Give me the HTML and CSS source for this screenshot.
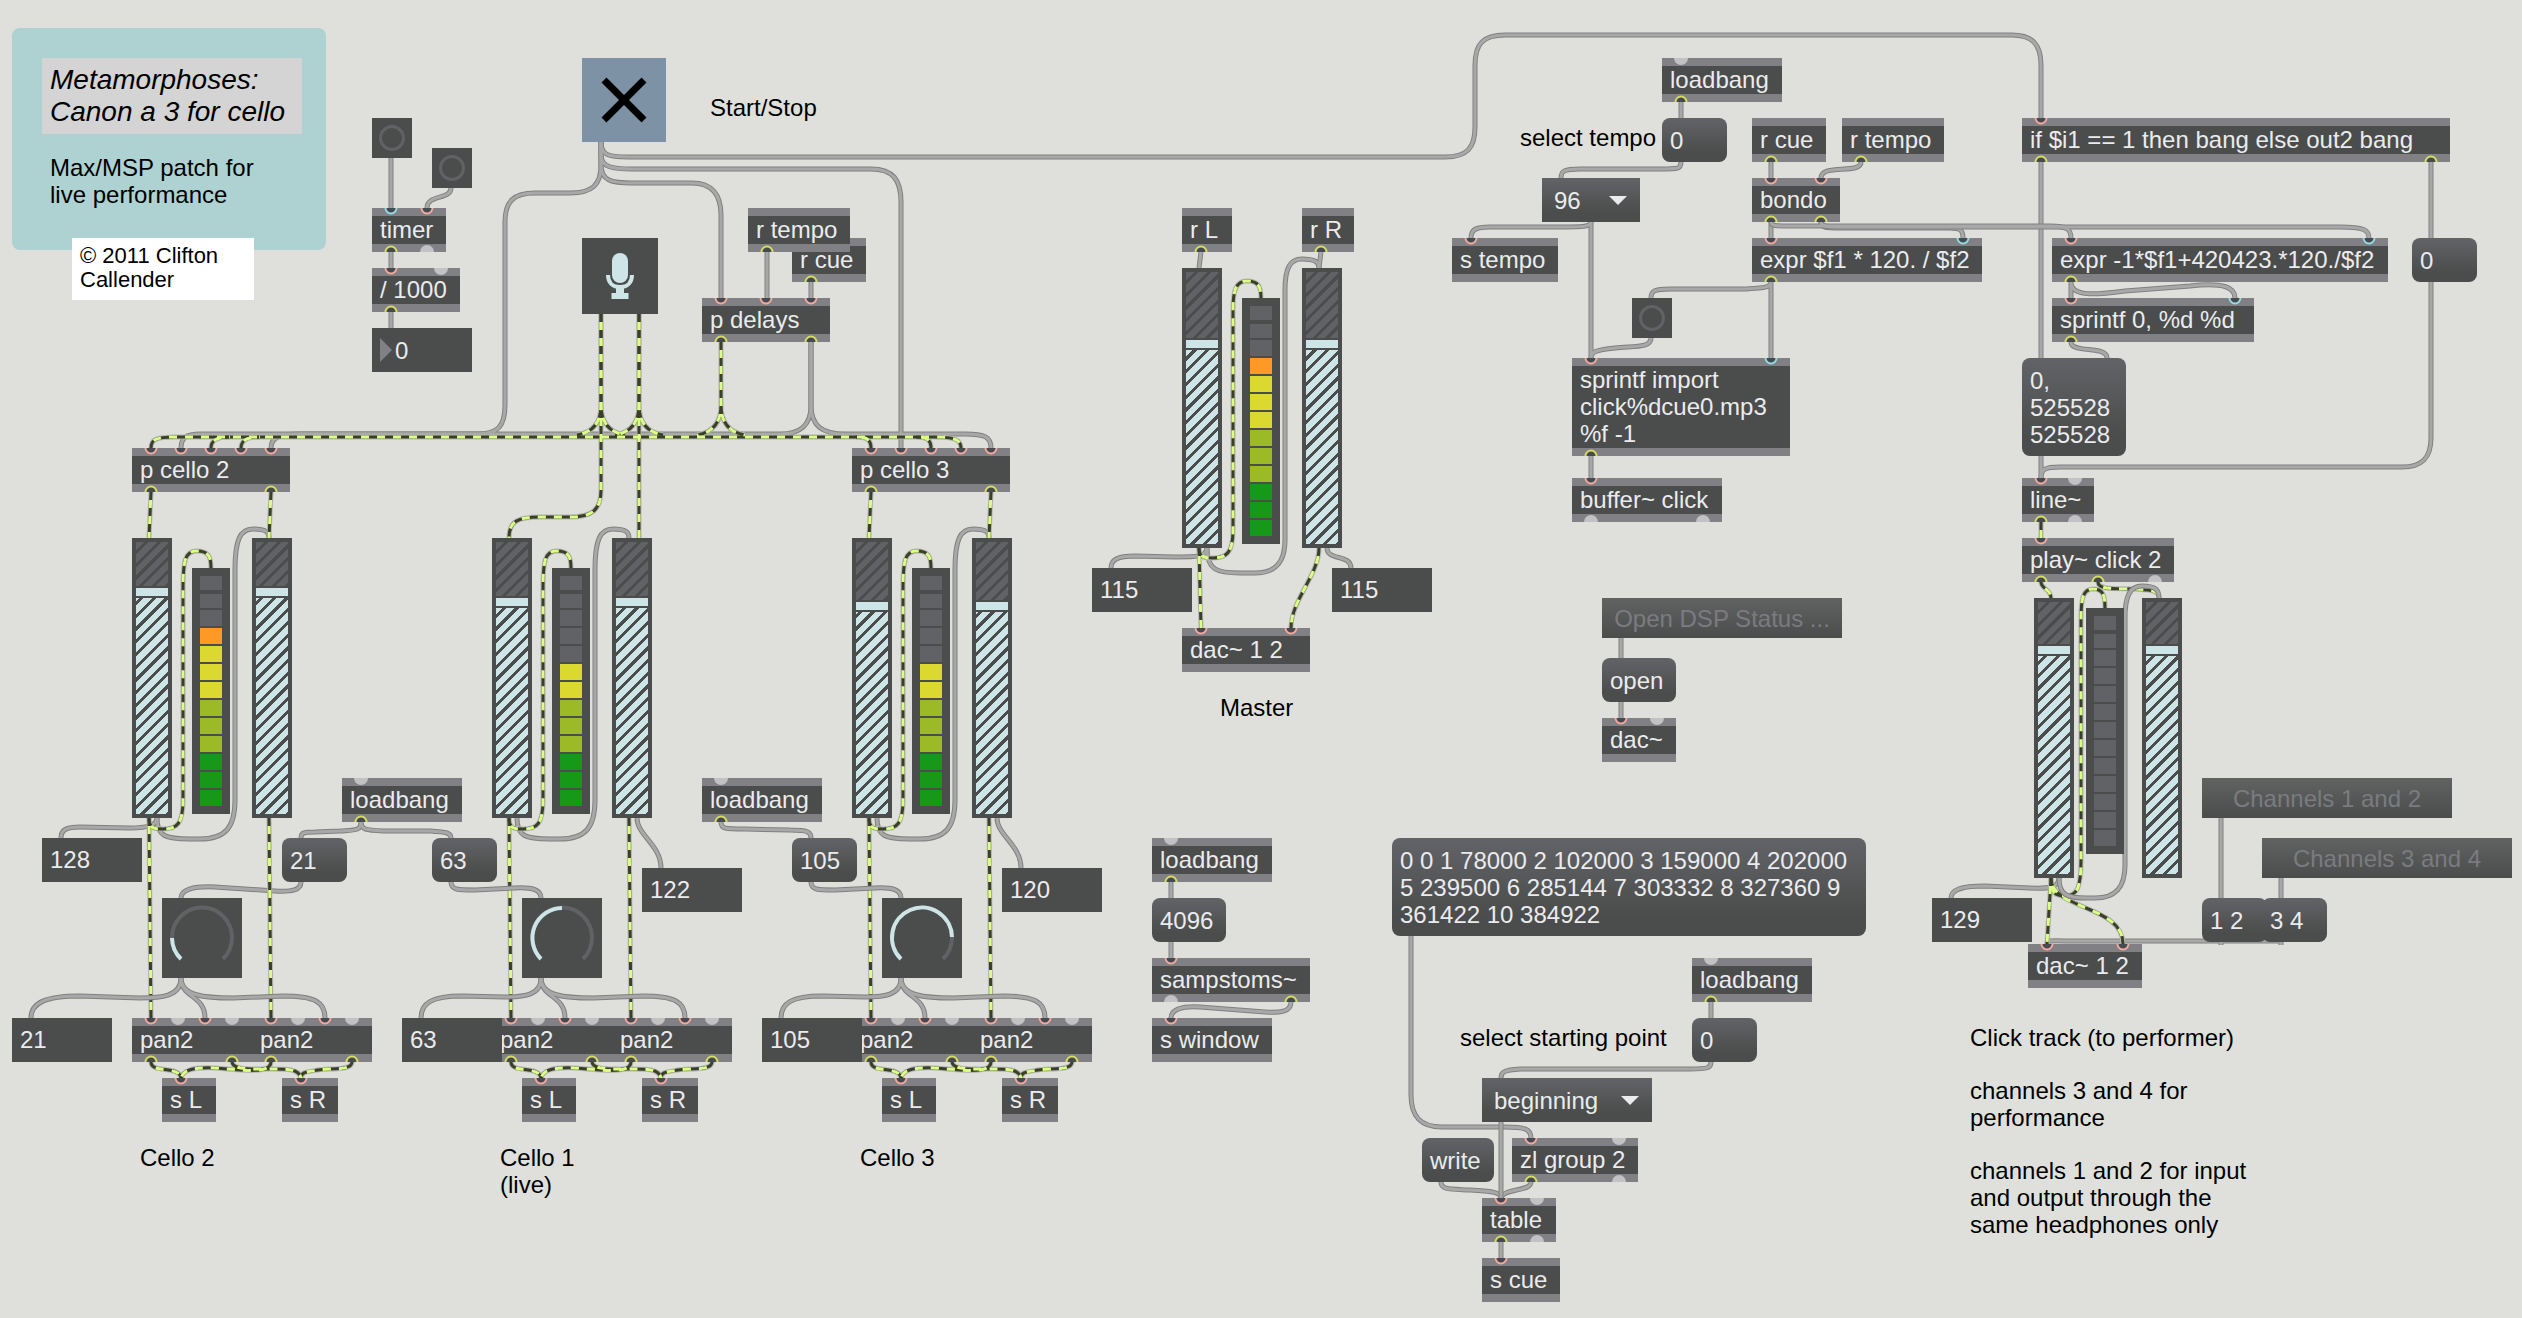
FILE: index.html
```html
<!DOCTYPE html>
<html lang="en">
<head>
<meta charset="utf-8">
<title>Metamorphoses: Canon a 3 for cello</title>
<link rel="stylesheet" href="styles.css">
</head>
<body>
<main class="canvas">

<svg class="layer" aria-hidden="true">
  <defs>
    <!-- cords repeated in each of the three cello strips -->
    <g id="strip-control">
      <path d="M157 818C157 836 165 839 190 839H200C225 839 235 828 235 800V570C235 540 240 529 253 529C266 529 269 532 269 538"/>
    </g>
    <g id="strip-signal">
      <path d="M149 818C149 829 155 829 163 829C177 829 183 824 183 800V590C183 560 185 551 197 551C208 551 211 556 211 568"/>
      <path d="M149 818L151 1018"/>
      <path d="M269 818L271 1018"/>
      <path d="M151 1062C151 1074 179 1065 181 1078"/>
      <path d="M232 1062C233 1069 245 1069 265 1069S299 1068 301 1078"/>
      <path d="M271 1062C271 1071 255 1071 240 1070L215 1068C190 1067 183 1071 181 1078"/>
      <path d="M352 1062C352 1071 330 1068 318 1070S301 1072 301 1078"/>
    </g>
    <g id="strip-dial">
      <path d="M181 978C181 998 205 995 205 1018"/>
      <path d="M181 978C181 996 205 998 233 998L283 996C315 996 325 1002 325 1018"/>
    </g>

    <g id="control">
      <use href="#strip-control"/>
      <use href="#strip-control" x="360"/>
      <use href="#strip-control" x="720"/>
      <path d="M391 158V208M451 188C451 200 427 194 427 208M391 252V268M391 312V328"/>
      <path d="M601 142V165C601 185 592 193 570 193H535C514 193 505 201 505 222V405C505 426 498 434 478 434H200C186 434 181 438 181 448"/>
      <path d="M601 142C601 155 608 157 628 157H1445C1467 157 1475 148 1475 127V65C1475 44 1483 35 1505 35H2012C2032 35 2041 44 2041 65V118"/>
      <path d="M601 142V155C601 167 612 169 632 169H871C893 169 901 180 901 202V448"/>
      <path d="M601 142V165C601 181 612 183 632 183H692C712 183 721 195 721 215V298"/>
      <path d="M767 252V298M811 282V298"/>
      <path d="M811 342V405C811 426 800 434 780 434H300C280 434 271 437 271 448"/>
      <path d="M811 342V405C811 426 822 434 845 434H965C985 434 991 437 991 448"/>
      <path d="M157 818C157 826 145 828 130 828L80 827C66 827 61 830 61 838"/>
      <path d="M637 818C637 835 661 845 661 868M997 818C997 835 1021 845 1021 868"/>
      <path d="M361 822C361 831 355 830 340 831L315 832C303 832 301 833 301 838"/>
      <path d="M361 822C361 830 366 830 385 831H430C447 832 451 833 451 838"/>
      <path d="M721 822C721 829 725 829 745 829L790 830C808 830 811 832 811 838"/>
      <path d="M301 882C301 890 292 892 275 891L215 887C192 886 181 890 181 898"/>
      <path d="M1201 252L1199 268M1321 252L1319 268"/>
      <path d="M1207 548C1207 557 1195 557 1175 557L1135 556C1117 556 1111 560 1111 568"/>
      <path d="M1207 548C1207 570 1217 573 1240 573H1255C1276 573 1285 562 1285 540V290C1285 268 1290 259 1302 259C1315 259 1319 262 1319 268"/>
      <path d="M1327 548C1327 561 1351 554 1351 568"/>
      <path d="M1171 882V898M1171 942V958M1621 638V658M1621 702V718"/>
      <path d="M1291 1002C1291 1012 1280 1013 1265 1012L1200 1007C1180 1006 1171 1010 1171 1018"/>
      <path d="M1681 102V118M1681 162C1681 169 1678 169 1660 169H1580C1564 169 1561 171 1561 178"/>
      <path d="M1591 222C1591 227 1580 227 1565 227H1490C1475 227 1471 230 1471 238"/>
      <path d="M1591 222V358M1771 162V178M1861 162C1861 175 1821 163 1821 178M1771 222V238"/>
      <path d="M1771 282V358M1771 282C1771 288 1762 288 1745 289H1670C1654 289 1651 291 1651 298"/>
      <path d="M1651 338C1651 348 1635 346 1615 348S1591 352 1591 358M1591 456V478"/>
      <path d="M1821 222C1821 228 1826 228 1840 228H1950C1960 228 1963 230 1963 238"/>
      <path d="M2041 162V358M2431 162V238M2041 456V478"/>
      <path d="M2431 282V438C2431 458 2422 467 2402 467H2060C2045 467 2041 469 2041 478"/>
      <path d="M2071 282V298M2071 282C2071 297 2095 295 2125 291L2190 286C2225 282 2235 288 2235 298"/>
      <path d="M2071 342C2071 354 2107 345 2107 358"/>
      <path d="M2059 878C2059 887 2050 889 2030 888L1985 886C1960 886 1951 890 1951 898"/>
      <path d="M2221 818V898M2281 878V898M2281 945V941H2065C2050 940 2047 941 2047 944M2221 945V941"/>
      <path d="M1411 936V1095C1411 1116 1420 1127 1442 1127H1505C1525 1127 1531 1129 1531 1138"/>
      <path d="M1711 1002V1018M1711 1062C1711 1068 1708 1069 1690 1069H1520C1504 1070 1501 1072 1501 1078"/>
      <path d="M1441 1182C1441 1190 1450 1189 1470 1190S1501 1192 1501 1198"/>
      <path d="M1531 1182C1531 1192 1503 1188 1501 1198M1501 1242V1258"/>
    </g>
    <g id="signal">
      <use href="#strip-signal"/>
      <use href="#strip-signal" x="360"/>
      <use href="#strip-signal" x="720"/>
      <!-- branches off the bus that feeds both cello patches -->
      <path d="M721 342V405C721 426 709 433 697 435M721 342V405C721 426 733 433 745 435"/>
      <path d="M601 314V405C601 426 589 433 577 435M601 314V405C601 426 613 433 625 435"/>
      <path d="M639 314V405C639 426 627 433 615 435M639 314V405C639 426 651 433 663 435"/>
      <path d="M211 448C211 440 217 437 230 437M241 448C241 440 247 437 260 437"/>
      <path d="M871 448C871 440 867 437 856 437M931 448C931 440 927 437 916 437"/>
      <path d="M151 448C151 440 155 437 175 437H935C955 437 961 440 961 448"/>
      <path d="M601 314V490C601 510 592 517 570 517H540C518 517 509 521 509 538"/>
      <path d="M639 314V538"/>
      <path d="M151 492L149 538M271 492L269 538M871 492L869 538M991 492L989 538"/>
      <path d="M1199 548C1199 558 1205 558 1213 558C1227 558 1233 552 1233 530V310C1233 290 1236 281 1247 281C1258 281 1261 286 1261 298"/>
      <path d="M1199 548L1201 628M1319 548C1319 575 1291 600 1291 628"/>
      <path d="M2041 522V538M2041 582C2041 589 2051 589 2051 598"/>
      <path d="M2098 582C2098 591 2120 588 2135 589S2159 590 2159 598"/>
      <path d="M2051 878C2051 894 2056 896 2065 896C2077 896 2081 888 2081 860V620C2081 598 2083 589 2093 589C2103 589 2105 595 2105 608"/>
      <path d="M2051 878L2047 944M2051 878C2051 910 2123 905 2123 944"/>
    </g>
    <g id="control-front">
      <use href="#strip-dial"/>
      <use href="#strip-dial" x="360"/>
      <use href="#strip-dial" x="720"/>
      <path d="M181 978C181 997 160 998 140 998L80 996C45 996 31 1003 31 1018"/>
      <path d="M541 978C541 995 525 997 505 997L462 996C432 996 421 1003 421 1018"/>
      <path d="M901 978C901 995 885 997 865 997L822 996C792 996 781 1003 781 1018"/>
      <path d="M451 882C451 890 458 890 475 890L515 888C533 887 541 890 541 898"/>
      <path d="M811 882C811 890 818 890 835 890L875 888C893 887 901 890 901 898"/>
      <path d="M1771 222C1771 226 1775 226 1790 226H2050C2068 226 2071 230 2071 238"/>
      <path d="M1821 222C1821 226 1825 227 1840 227H2340C2364 227 2369 230 2369 238"/>
      <path d="M2059 878C2059 896 2068 898 2087 898H2095C2117 898 2125 886 2125 865V618C2125 596 2130 586 2142 586C2156 586 2159 590 2159 598"/>
      <path d="M1501 1122V1198"/>
    </g>
  </defs>
  <use href="#control" class="cord-edge"/><use href="#control" class="cord-core"/>
  <use href="#signal" class="signal-edge"/><use href="#signal" class="signal-dark"/><use href="#signal" class="signal-light"/>
  <use href="#control-front" class="cord-edge"/><use href="#control-front" class="cord-core"/>
</svg>

<!-- title -->
<section class="panel">
  <h1>Metamorphoses:<br>Canon a 3 for cello</h1>
  <p>Max/MSP patch for<br>live performance</p>
</section>
<p class="copyright">© 2011 Clifton Callender</p>

<!-- timer -->
<button class="bang bang-start" aria-label="Start timer"></button>
<button class="bang bang-stop" aria-label="Stop timer"></button>
<div class="obj timer">timer</div>
<div class="obj divide">/ 1000</div>
<div class="seconds"><span class="seconds-mark"></span><input type="text" value="0" aria-label="Seconds"></div>

<!-- transport -->
<div class="toggle">
  <input type="checkbox" id="run" checked>
  <svg viewBox="0 0 84 84" aria-hidden="true"><path d="M22 22L62 62M62 22L22 62"/></svg>
</div>
<label class="comment start" for="run">Start/Stop</label>
<button class="mic" aria-label="Audio input">
  <svg viewBox="0 0 76 76" aria-hidden="true">
    <rect x="30" y="15" width="16" height="30" rx="8"/>
    <path class="mic-cup" d="M26 37C26 45 31 49 38 49S50 45 50 37"/>
    <path d="M34 49H42V55H46.500V61H29.500V55H34Z"/>
  </svg>
</button>
<div class="obj r-cue">r cue</div>
<div class="obj r-tempo">r tempo</div>
<div class="obj delays">p delays</div>
<div class="obj cello-2-in">p cello 2</div>
<div class="obj cello-3-in">p cello 3</div>

<!-- cello 2 -->
<section class="strip strip-a">
  <input type="range" class="gain left" max="157" value="128" style="--knob:50px" aria-label="Cello 2 left">
  <div class="meter"><i></i><i></i><i></i><i class="hot"></i><i class="warm"></i><i class="warm"></i><i class="warm"></i><i class="mid"></i><i class="mid"></i><i class="mid"></i><i class="low"></i><i class="low"></i><i class="low"></i></div>
  <input type="range" class="gain right" max="157" value="128" style="--knob:50px" aria-label="Cello 2 right">
  <div class="dial">
    <input type="range" max="127" value="21" aria-label="Cello 2 pan">
    <svg viewBox="0 0 80 80" aria-hidden="true"><path d="M19 61A30 30 0 1 1 61 61"/><path class="value" d="M19 61A30 30 0 0 1 10 40"/></svg>
  </div>
  <div class="obj pan-l">pan2</div>
  <div class="obj pan-r">pan2</div>
  <div class="obj send-l">s L</div>
  <div class="obj send-r">s R</div>
  <h2 class="comment name">Cello 2</h2>
</section>
<input type="text" class="num level-2" value="128" aria-label="Cello 2 level">
<input type="text" class="num pan-2" value="21" aria-label="Cello 2 pan value">
<div class="obj load-a">loadbang</div>
<button class="msg msg-21">21</button>
<button class="msg msg-63">63</button>

<!-- cello 1 -->
<section class="strip strip-b">
  <input type="range" class="gain left" max="157" value="122" style="--knob:60px" aria-label="Cello 1 left">
  <div class="meter"><i></i><i></i><i></i><i></i><i></i><i class="warm"></i><i class="warm"></i><i class="mid"></i><i class="mid"></i><i class="mid"></i><i class="low"></i><i class="low"></i><i class="low"></i></div>
  <input type="range" class="gain right" max="157" value="122" style="--knob:60px" aria-label="Cello 1 right">
  <div class="dial">
    <input type="range" max="127" value="63" aria-label="Cello 1 pan">
    <svg viewBox="0 0 80 80" aria-hidden="true"><path d="M19 61A30 30 0 1 1 61 61"/><path class="value" d="M19 61A30 30 0 0 1 40 10"/></svg>
  </div>
  <div class="obj pan-l">pan2</div>
  <div class="obj pan-r">pan2</div>
  <div class="obj send-l">s L</div>
  <div class="obj send-r">s R</div>
  <h2 class="comment name">Cello 1<br>(live)</h2>
</section>
<input type="text" class="num level-1" value="122" aria-label="Cello 1 level">
<input type="text" class="num pan-1" value="63" aria-label="Cello 1 pan value">
<div class="obj load-b">loadbang</div>
<button class="msg msg-105">105</button>

<!-- cello 3 -->
<section class="strip strip-c">
  <input type="range" class="gain left" max="157" value="120" style="--knob:64px" aria-label="Cello 3 left">
  <div class="meter"><i></i><i></i><i></i><i></i><i></i><i class="warm"></i><i class="warm"></i><i class="mid"></i><i class="mid"></i><i class="mid"></i><i class="low"></i><i class="low"></i><i class="low"></i></div>
  <input type="range" class="gain right" max="157" value="120" style="--knob:64px" aria-label="Cello 3 right">
  <div class="dial">
    <input type="range" max="127" value="105" aria-label="Cello 3 pan">
    <svg viewBox="0 0 80 80" aria-hidden="true"><path d="M19 61A30 30 0 1 1 61 61"/><path class="value" d="M19 61A30 30 0 1 1 70 39"/></svg>
  </div>
  <div class="obj pan-l">pan2</div>
  <div class="obj pan-r">pan2</div>
  <div class="obj send-l">s L</div>
  <div class="obj send-r">s R</div>
  <h2 class="comment name">Cello 3</h2>
</section>
<input type="text" class="num level-3" value="120" aria-label="Cello 3 level">
<input type="text" class="num pan-3" value="105" aria-label="Cello 3 pan value">

<!-- master -->
<div class="obj r-left">r L</div>
<div class="obj r-right">r R</div>
<section class="strip strip-master">
  <input type="range" class="gain left" max="157" value="115" style="--knob:72px" aria-label="Master left">
  <div class="meter"><i></i><i></i><i></i><i class="hot"></i><i class="warm"></i><i class="warm"></i><i class="warm"></i><i class="mid"></i><i class="mid"></i><i class="mid"></i><i class="low"></i><i class="low"></i><i class="low"></i></div>
  <input type="range" class="gain right" max="157" value="115" style="--knob:72px" aria-label="Master right">
</section>
<input type="text" class="num master-l" value="115" aria-label="Master left level">
<input type="text" class="num master-r" value="115" aria-label="Master right level">
<div class="obj dac-master">dac~ 1 2</div>
<h2 class="comment master">Master</h2>

<!-- window size -->
<div class="obj load-c">loadbang</div>
<button class="msg msg-4096">4096</button>
<div class="obj sampstoms">sampstoms~</div>
<div class="obj s-window">s window</div>

<!-- dsp status -->
<button class="text-button dsp">Open DSP Status ...</button>
<button class="msg msg-open">open</button>
<div class="obj dac-status">dac~</div>

<!-- tempo -->
<div class="obj load-d">loadbang</div>
<button class="msg msg-tempo">0</button>
<label class="comment tempo-label" for="tempo">select tempo</label>
<div class="menu tempo-menu"><select id="tempo"><option>96</option></select></div>
<div class="obj s-tempo">s tempo</div>
<div class="obj cue-in">r cue</div>
<div class="obj tempo-in">r tempo</div>
<div class="obj bondo">bondo</div>
<div class="obj expr-a">expr $f1 * 120. / $f2</div>
<button class="bang bang-import" aria-label="Import click"></button>
<div class="obj import">sprintf import click%dcue0.mp3 %f -1</div>
<div class="obj buffer">buffer~ click</div>

<!-- starting point -->
<button class="msg msg-cues">0 0 1 78000 2 102000 3 159000 4 202000 5 239500 6 285144 7 303332 8 327360 9 361422 10 384922</button>
<div class="obj load-e">loadbang</div>
<button class="msg msg-point">0</button>
<label class="comment point-label" for="point">select starting point</label>
<div class="menu point-menu"><select id="point"><option>beginning</option></select></div>
<button class="msg msg-write">write</button>
<div class="obj zl">zl group 2</div>
<div class="obj table">table</div>
<div class="obj s-cue">s cue</div>

<!-- click track -->
<div class="obj if">if $i1 == 1 then bang else out2 bang</div>
<div class="obj expr-b">expr -1*$f1+420423.*120./$f2</div>
<button class="msg msg-zero">0</button>
<div class="obj sprintf">sprintf 0, %d %d</div>
<button class="msg msg-ramp">0, 525528 525528</button>
<div class="obj line">line~</div>
<div class="obj play">play~ click 2</div>
<section class="click-strip">
  <input type="range" class="gain left" max="157" value="129" style="--knob:48px" aria-label="Click left">
  <div class="meter"><i></i><i></i><i></i><i></i><i></i><i></i><i></i><i></i><i></i><i></i><i></i><i></i><i></i></div>
  <input type="range" class="gain right" max="157" value="129" style="--knob:48px" aria-label="Click right">
</section>
<input type="text" class="num click-level" value="129" aria-label="Click level">
<div class="obj dac-click">dac~ 1 2</div>
<button class="text-button ch-12">Channels 1 and 2</button>
<button class="text-button ch-34">Channels 3 and 4</button>
<button class="msg msg-34">3 4</button>
<button class="msg msg-12">1 2</button>
<div class="comment notes">
  <p>Click track (to performer)</p>
  <p>channels 3 and 4 for<br>performance</p>
  <p>channels 1 and 2 for input<br>and output through the<br>same headphones only</p>
</div>

<svg class="layer" aria-hidden="true">
  <defs>
    <path id="i" class="inlet" d="M-5.500 0A5.500 5.500 0 0 0 5.500 0"/>
    <path id="b" class="inlet cold" d="M-5.500 0A5.500 5.500 0 0 0 5.500 0"/>
    <path id="o" class="outlet" d="M-5.500 0A5.500 5.500 0 0 1 5.500 0"/>
    <path id="fi" class="free" d="M-7 0A7 7 0 0 0 7 0"/>
    <path id="fo" class="free" d="M-7 0A7 7 0 0 1 7 0"/>
    <g id="strip-ports">
      <use href="#i" x="151" y="1018"/><use href="#fi" x="178" y="1018"/><use href="#i" x="205" y="1018"/><use href="#fi" x="232" y="1018"/>
      <use href="#i" x="271" y="1018"/><use href="#fi" x="298" y="1018"/><use href="#i" x="325" y="1018"/><use href="#fi" x="352" y="1018"/>
      <use href="#o" x="151" y="1062"/><use href="#o" x="232" y="1062"/><use href="#o" x="271" y="1062"/><use href="#o" x="352" y="1062"/>
      <use href="#i" x="181" y="1078"/><use href="#i" x="301" y="1078"/>
    </g>
    <g id="cello-ports">
      <use href="#i" x="151" y="448"/><use href="#i" x="181" y="448"/><use href="#i" x="211" y="448"/><use href="#i" x="241" y="448"/><use href="#i" x="271" y="448"/>
      <use href="#o" x="151" y="492"/><use href="#o" x="271" y="492"/>
    </g>
  </defs>
  <use href="#strip-ports"/><use href="#strip-ports" x="360"/><use href="#strip-ports" x="720"/>
  <use href="#cello-ports"/><use href="#cello-ports" x="720"/>
  <use href="#b" x="391" y="208"/><use href="#i" x="427" y="208"/><use href="#o" x="391" y="252"/><use href="#fo" x="427" y="252"/>
  <use href="#i" x="391" y="268"/><use href="#fi" x="441" y="268"/><use href="#o" x="391" y="312"/>
  <use href="#o" x="767" y="252"/><use href="#o" x="811" y="282"/>
  <use href="#i" x="721" y="298"/><use href="#i" x="766" y="298"/><use href="#i" x="811" y="298"/><use href="#o" x="721" y="342"/><use href="#o" x="811" y="342"/>
  <use href="#fi" x="361" y="778"/><use href="#o" x="361" y="822"/><use href="#fi" x="721" y="778"/><use href="#o" x="721" y="822"/>
  <use href="#o" x="1201" y="252"/><use href="#o" x="1321" y="252"/><use href="#i" x="1201" y="628"/><use href="#i" x="1291" y="628"/>
  <use href="#fi" x="1171" y="838"/><use href="#o" x="1171" y="882"/><use href="#i" x="1171" y="958"/><use href="#fo" x="1171" y="1002"/><use href="#o" x="1291" y="1002"/><use href="#i" x="1171" y="1018"/>
  <use href="#i" x="1621" y="718"/><use href="#fi" x="1657" y="718"/>
  <use href="#fi" x="1681" y="58"/><use href="#o" x="1681" y="102"/><use href="#i" x="1471" y="238"/>
  <use href="#o" x="1771" y="162"/><use href="#o" x="1861" y="162"/><use href="#i" x="1771" y="178"/><use href="#i" x="1821" y="178"/><use href="#o" x="1771" y="222"/><use href="#o" x="1821" y="222"/>
  <use href="#i" x="1771" y="238"/><use href="#b" x="1963" y="238"/><use href="#o" x="1771" y="282"/>
  <use href="#i" x="1591" y="358"/><use href="#b" x="1771" y="358"/><use href="#o" x="1591" y="456"/>
  <use href="#i" x="1591" y="478"/><use href="#fo" x="1591" y="522"/><use href="#fo" x="1703" y="522"/>
  <use href="#fi" x="1711" y="958"/><use href="#o" x="1711" y="1002"/>
  <use href="#i" x="1531" y="1138"/><use href="#fi" x="1619" y="1138"/><use href="#o" x="1531" y="1182"/><use href="#fo" x="1619" y="1182"/>
  <use href="#i" x="1501" y="1198"/><use href="#fi" x="1537" y="1198"/><use href="#o" x="1501" y="1242"/><use href="#fo" x="1537" y="1242"/><use href="#i" x="1501" y="1258"/>
  <use href="#i" x="2041" y="118"/><use href="#o" x="2041" y="162"/><use href="#o" x="2431" y="162"/>
  <use href="#i" x="2071" y="238"/><use href="#b" x="2369" y="238"/><use href="#o" x="2071" y="282"/>
  <use href="#i" x="2071" y="298"/><use href="#b" x="2235" y="298"/><use href="#o" x="2071" y="342"/>
  <use href="#i" x="2041" y="478"/><use href="#fi" x="2075" y="478"/><use href="#o" x="2041" y="522"/><use href="#fo" x="2075" y="522"/>
  <use href="#i" x="2041" y="538"/><use href="#o" x="2041" y="582"/><use href="#o" x="2098" y="582"/><use href="#fo" x="2155" y="582"/>
  <use href="#i" x="2047" y="944"/><use href="#i" x="2123" y="944"/>
</svg>
</main>
</body>
</html>
```
FILE: styles.css
```css
:root {
  --paper: #dfe0db;
  --body: #4a4d4b;
  --band: #808085;
  --unlit: #616266;
  --ice: #cee5e8;
  --text: #ebebee;
}

*, *::before { box-sizing: border-box; }

body {
  margin: 0;
  background: var(--paper);
  color: #000;
  font: 24px/27px "Liberation Sans", Arial, sans-serif;
}

h1, h2, p { margin: 0; font-weight: normal; }
h2 { font-size: inherit; }

button, input, select {
  margin: 0;
  padding: 0;
  border: 0;
  border-radius: 0;
  color: var(--text);
  font: inherit;
  appearance: none;
}

/* the patcher canvas: objects sit at free positions, cords run between them */
.canvas { position: relative; min-height: 100vh; overflow: hidden; }
.layer { position: absolute; inset: 0; width: 100%; height: 100%; fill: none; pointer-events: none; }

.cord-edge { stroke: #808080; stroke-width: 5; }
.cord-core { stroke: #a8a8a8; stroke-width: 3; }
.signal-edge { stroke: #b3b4b1; stroke-width: 5; }
.signal-dark { stroke: #3a4028; stroke-width: 3; }
.signal-light { stroke: #dbff85; stroke-width: 3; stroke-dasharray: 8 8; stroke-dashoffset: 8; }

.inlet { fill: #454b50; stroke: #f5a99e; stroke-width: 2; }
.cold { stroke: #93dce6; }
.outlet { fill: #454b50; stroke: #d5dc60; stroke-width: 2; }
.free { fill: #c2c2c5; }

/* title panel */
.panel { position: absolute; left: 12px; top: 28px; width: 314px; height: 222px; padding: 30px 24px 0 30px; border-radius: 8px; background: #aed1d1; }
.panel h1 { padding: 6px 8px; background: #d4d4d4; font-size: 28px; line-height: 32px; font-style: italic; }
.panel p { padding: 20px 8px 0; }
.copyright { position: absolute; left: 72px; top: 238px; width: 182px; height: 62px; padding: 6px 8px; background: #fff; font-size: 22px; line-height: 24px; }

/* boxes */
.obj { position: absolute; min-height: 44px; padding: 0 8px 1px; border: solid var(--band); border-width: 8px 0; background: var(--body); color: var(--text); }
.msg { position: absolute; width: 65px; height: 44px; padding: 0 8px; border-radius: 8px; background: linear-gradient(#626367, var(--body) 80%); text-align: left; }
.num { position: absolute; width: 100px; height: 44px; padding: 0 8px; background: var(--body); }
.text-button { position: absolute; height: 40px; background: linear-gradient(#606361, var(--body)); color: #7b7b81; text-align: center; }
.comment { position: absolute; white-space: nowrap; }

.bang { position: absolute; width: 40px; height: 40px; padding: 7px; background: var(--body); }
.bang::before { content: ""; display: block; width: 26px; height: 26px; border: 3px solid var(--unlit); border-radius: 50%; }

.toggle { position: absolute; left: 582px; top: 58px; width: 84px; height: 84px; background: #7e92a6; }
.toggle input { position: absolute; inset: 0; opacity: 0; }
.toggle svg { display: block; stroke: #000; stroke-width: 7; }

.mic { position: absolute; left: 582px; top: 238px; width: 76px; height: 76px; background: var(--body); }
.mic svg { display: block; fill: var(--ice); }
.mic .mic-cup { fill: none; stroke: var(--ice); stroke-width: 4; }
.mic rect { stroke: var(--body); stroke-width: 2; paint-order: stroke; }

.seconds { position: absolute; left: 372px; top: 328px; width: 100px; height: 44px; padding-left: 8px; display: flex; align-items: center; gap: 3px; background: var(--body); }
.seconds input { flex: 1; width: 0; background: none; }
.seconds-mark { width: 0; height: 0; border: solid transparent; border-width: 12px 0 12px 12px; border-left-color: var(--band); }

.menu { position: absolute; height: 44px; background: linear-gradient(#626367, var(--body) 80%); }
.menu select { width: 100%; height: 100%; padding: 0 12px; background: none; }
.menu::after { content: ""; position: absolute; right: 13px; top: 18px; border: solid transparent; border-width: 9px 9px 0; border-top-color: var(--text); pointer-events: none; }

/* gain slider */
.gain {
  position: absolute; top: 0; width: 40px; height: 280px; border: 4px solid var(--body);
  writing-mode: vertical-lr; direction: rtl;
  background:
    linear-gradient(var(--ice), var(--ice)) 0 calc(var(--knob) - 4px) / 100% 8px no-repeat,
    linear-gradient(var(--body), var(--body)) 0 calc(var(--knob) - 6px) / 100% 12px no-repeat,
    repeating-linear-gradient(135deg, transparent 0 6px, var(--body) 6px 9px),
    linear-gradient(var(--unlit) var(--knob), var(--ice) var(--knob));
}
.gain::-webkit-slider-thumb { appearance: none; opacity: 0; }
.gain.left { left: 0; }
.gain.right { left: 120px; }

/* level meter */
.meter { position: absolute; left: 60px; top: 30px; width: 38px; height: 246px; padding: 8px; display: flex; flex-direction: column; gap: 2px; background: var(--body); }
.meter i { height: 16px; background: var(--unlit); }
.meter i:nth-child(-n+2) { height: 14px; }
.meter i:first-child { margin-bottom: 2px; }
.meter .hot { background: #ff9926; }
.meter .warm { background: #dbd92f; }
.meter .mid { background: #9cb926; }
.meter .low { background: #169919; }

/* pan dial */
.dial { position: absolute; left: 30px; top: 360px; width: 80px; height: 80px; background: var(--body); }
.dial input { position: absolute; inset: 0; width: 100%; opacity: 0; }
.dial svg { display: block; fill: none; stroke: var(--unlit); stroke-width: 4; }
.dial .value { stroke: var(--ice); }

/* channel strips */
.strip { position: absolute; top: 538px; }
.strip-a { left: 132px; }
.strip-b { left: 492px; }
.strip-c { left: 852px; }
.strip-master { left: 1182px; top: 268px; }
.strip .pan-l { left: 0; top: 480px; width: 120px; }
.strip .pan-r { left: 120px; top: 480px; width: 120px; }
.strip .send-l { left: 30px; top: 540px; width: 54px; }
.strip .send-r { left: 150px; top: 540px; width: 56px; }
.strip .name { left: 8px; top: 606px; }

.click-strip { position: absolute; left: 2034px; top: 598px; }
.click-strip .gain.right { left: 108px; }
.click-strip .meter { left: 52px; top: 10px; }

/* positions on the canvas */
.bang-start { left: 372px; top: 118px; }
.bang-stop { left: 432px; top: 148px; }
.timer { left: 372px; top: 208px; width: 74px; }
.divide { left: 372px; top: 268px; width: 88px; }

.start { left: 710px; top: 94px; }
.r-cue { left: 792px; top: 238px; width: 74px; }
.r-tempo { left: 748px; top: 208px; width: 102px; }
.delays { left: 702px; top: 298px; width: 128px; }
.cello-2-in { left: 132px; top: 448px; width: 158px; }
.cello-3-in { left: 852px; top: 448px; width: 158px; }

.level-2 { left: 42px; top: 838px; }
.level-1 { left: 642px; top: 868px; }
.level-3 { left: 1002px; top: 868px; }
.pan-2 { left: 12px; top: 1018px; }
.pan-1 { left: 402px; top: 1018px; }
.pan-3 { left: 762px; top: 1018px; }
.load-a { left: 342px; top: 778px; width: 120px; }
.load-b { left: 702px; top: 778px; width: 120px; }
.msg-21 { left: 282px; top: 838px; }
.msg-63 { left: 432px; top: 838px; }
.msg-105 { left: 792px; top: 838px; }

.r-left { left: 1182px; top: 208px; width: 50px; }
.r-right { left: 1302px; top: 208px; width: 52px; }
.master-l { left: 1092px; top: 568px; }
.master-r { left: 1332px; top: 568px; }
.dac-master { left: 1182px; top: 628px; width: 128px; }
.master { left: 1220px; top: 694px; }

.load-c { left: 1152px; top: 838px; width: 120px; }
.msg-4096 { left: 1152px; top: 898px; width: 74px; }
.sampstoms { left: 1152px; top: 958px; width: 158px; }
.s-window { left: 1152px; top: 1018px; width: 120px; }

.dsp { left: 1602px; top: 598px; width: 240px; }
.msg-open { left: 1602px; top: 658px; width: 74px; }
.dac-status { left: 1602px; top: 718px; width: 74px; }

.load-d { left: 1662px; top: 58px; width: 120px; }
.msg-tempo { left: 1662px; top: 118px; }
.tempo-label { left: 1520px; top: 124px; }
.tempo-menu { left: 1542px; top: 178px; width: 98px; }
.s-tempo { left: 1452px; top: 238px; width: 106px; }
.cue-in { left: 1752px; top: 118px; width: 74px; }
.tempo-in { left: 1842px; top: 118px; width: 102px; }
.bondo { left: 1752px; top: 178px; width: 88px; }
.expr-a { left: 1752px; top: 238px; width: 230px; }
.bang-import { left: 1632px; top: 298px; }
.import { left: 1572px; top: 358px; width: 218px; }
.buffer { left: 1572px; top: 478px; width: 150px; }

.msg-cues { left: 1392px; top: 838px; width: 474px; height: 98px; }
.load-e { left: 1692px; top: 958px; width: 120px; }
.msg-point { left: 1692px; top: 1018px; }
.point-label { left: 1460px; top: 1024px; }
.point-menu { left: 1482px; top: 1078px; width: 170px; }
.msg-write { left: 1422px; top: 1138px; width: 72px; }
.zl { left: 1512px; top: 1138px; width: 126px; }
.table { left: 1482px; top: 1198px; width: 74px; }
.s-cue { left: 1482px; top: 1258px; width: 78px; }

.if { left: 2022px; top: 118px; width: 428px; }
.expr-b { left: 2052px; top: 238px; width: 336px; }
.msg-zero { left: 2412px; top: 238px; }
.sprintf { left: 2052px; top: 298px; width: 202px; }
.msg-ramp { left: 2022px; top: 358px; width: 104px; height: 98px; }
.line { left: 2022px; top: 478px; width: 72px; }
.play { left: 2022px; top: 538px; width: 152px; }
.click-level { left: 1932px; top: 898px; }
.dac-click { left: 2028px; top: 944px; width: 114px; }
.ch-12 { left: 2202px; top: 778px; width: 250px; }
.ch-34 { left: 2262px; top: 838px; width: 250px; }
.msg-12 { left: 2202px; top: 898px; }
.msg-34 { left: 2262px; top: 898px; }
.notes { left: 1970px; top: 1024px; display: grid; gap: 26px; }
```
